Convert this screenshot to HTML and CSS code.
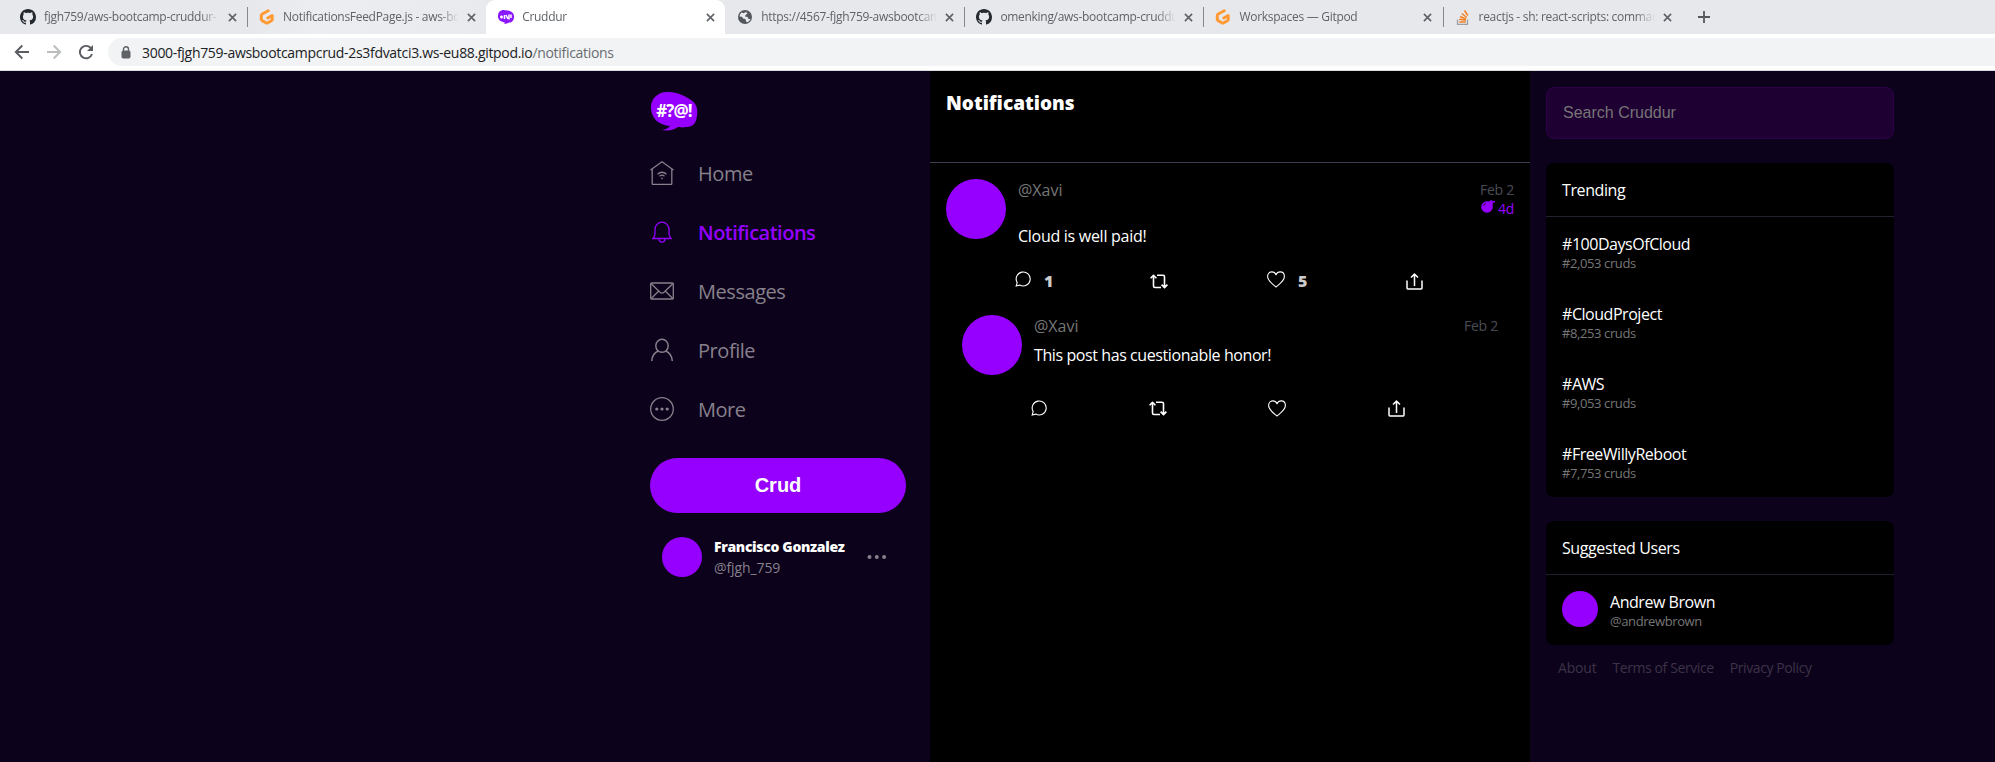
FILE: index.html
```html
<!DOCTYPE html>
<html lang="en">
<head>
<meta charset="utf-8">
<title>Cruddur</title>
<link rel="stylesheet" href="styles.css">
</head>
<body>
<svg class="defs" width="0" height="0">
  <symbol id="github" viewBox="0 0 16 16"><path fill="#24292f" d="M8 0C3.58 0 0 3.58 0 8c0 3.54 2.29 6.53 5.47 7.59.4.07.55-.17.55-.38 0-.19-.01-.82-.01-1.49-2.01.37-2.53-.49-2.69-.94-.09-.23-.48-.94-.82-1.13-.28-.15-.68-.52-.01-.53.63-.01 1.08.58 1.23.82.72 1.21 1.87.87 2.33.66.07-.52.28-.87.51-1.07-1.78-.2-3.64-.89-3.64-3.95 0-.87.31-1.59.82-2.15-.08-.2-.36-1.02.08-2.12 0 0 .67-.21 2.2.82.64-.18 1.32-.27 2-.27s1.36.09 2 .27c1.53-1.04 2.2-.82 2.2-.82.44 1.1.16 1.92.08 2.12.51.56.82 1.27.82 2.15 0 3.07-1.87 3.75-3.65 3.95.29.25.54.73.54 1.48 0 1.07-.01 1.93-.01 2.2 0 .21.15.46.55.38A8.01 8.01 0 0 0 16 8c0-4.42-3.58-8-8-8z"/></symbol>
  <symbol id="gitpod" viewBox="0 0 16 16"><path fill="none" stroke="#ff9a33" stroke-width="3" stroke-linejoin="round" stroke-linecap="round" d="M9.200 1.800L3.300 5Q2.300 5.600 2.300 6.600v3.600q0 .9.800 1.400l3.800 2.200q1 .5 2 0l3.500-2q.8-.5.800-1.400V6.500L8.800 9"/></symbol>
  <symbol id="close" viewBox="0 0 10 10"><path stroke="#5f6368" stroke-width="1.800" d="M1 1l8 8M9 1l-8 8"/></symbol>
  <symbol id="bubble" viewBox="0 0 48 40"><path fill="#9500ff" d="M1 18C0 8 8 0 19 1c8 0 16 4 22 8 6 4 7 10 6 16-1 9-6 11-11 11-4 1-7 0-8 0-4 3-9 4-16 3 4-1 7-2 8-4C9 34 2 28 1 18z"/></symbol>
  <symbol id="comment" viewBox="0 0 16 16"><path fill="none" stroke="#fff" stroke-width="1.1" d="M1.200 15l1-3.400A7 7 0 1 1 4.800 14.100z"/></symbol>
  <symbol id="repost" viewBox="0 0 18 15"><path fill="none" stroke="#fff" stroke-width="1.600" stroke-linejoin="round" d="M3.500 1.500V12q0 1.500 1.500 1.500h6M.6 4.300L3.500 1.300l2.900 3M7 1.300h6q1.500 0 1.500 1.500v10.500M11.600 10.600l2.900 3 2.900-3"/></symbol>
  <symbol id="heart" viewBox="0 0 18 17"><path fill="none" stroke="#fff" stroke-width="1.100" stroke-linejoin="round" d="M9 16C5.500 13 .6 9.800.6 5.500.6 2.600 2.500.9 4.900.9 7 .9 8.300 2.200 9 3.700 9.700 2.200 11 .9 13.100.9c2.400 0 4.300 1.700 4.300 4.600C17.400 9.800 12.500 13 9 16z"/></symbol>
  <symbol id="share" viewBox="0 0 17 17"><path fill="none" stroke="#fff" stroke-width="1.500" stroke-linejoin="round" d="M1 7.500V15q0 .9.900.9h13.200q.9 0 .9-.9V7.500M8.500 13V1.500M5 4.500l3.500-3.400L12 4.500"/></symbol>
</svg>

<header class="browser">
  <div class="tabs">
    <div class="tab"><svg class="fav"><use href="#github"/></svg><span class="label">fjgh759/aws-bootcamp-cruddur-</span><svg class="x"><use href="#close"/></svg></div>
    <div class="tab sep hover"><svg class="fav"><use href="#gitpod"/></svg><span class="label">NotificationsFeedPage.js - aws-bo</span><svg class="x"><use href="#close"/></svg></div>
    <div class="tab active"><svg class="fav" viewBox="0 0 16 16"><path fill="#8a17ff" d="M0 7.500c0-5 3-7 7-6.300C12 1.500 16 3 16 7.500c0 4-2 6-5 6-1 1-3 1.500-5 1l1-1C3 13 0 11 0 7.500z"/><path stroke="#fff" stroke-width="1.500" d="M2 8h3M3.500 6.500v3M6.500 6v4M8 6l2 4M11 5.500v5M13 5.500v3.500"/></svg><span class="label">Cruddur</span><svg class="x"><use href="#close"/></svg></div>
    <div class="tab"><svg class="fav" viewBox="0 0 16 16"><circle cx="8" cy="8" r="7" fill="#54585d"/><path fill="#e8eaed" d="M2.500 7.500q.3-2.500 2-4l2 .7L9 3l1.500 1.500L8.500 6l-.5 1.500L10.500 8l1 2h2q-1 2.500-3 3.300L9 12.500 8.500 10 6 9.500 5 7.800z"/></svg><span class="label">https://4567-fjgh759-awsbootcam</span><svg class="x"><use href="#close"/></svg></div>
    <div class="tab sep"><svg class="fav"><use href="#github"/></svg><span class="label">omenking/aws-bootcamp-cruddu</span><svg class="x"><use href="#close"/></svg></div>
    <div class="tab sep"><svg class="fav"><use href="#gitpod"/></svg><span class="label">Workspaces — Gitpod</span><svg class="x"><use href="#close"/></svg></div>
    <div class="tab sep"><svg class="fav" viewBox="0 0 16 16"><path fill="none" stroke="#9aa0a6" stroke-width="1.300" d="M2.500 10.500v4.800h10v-4.800"/><path stroke="#f48024" stroke-width="1.500" d="M4.200 13h6.600M4.300 10.300l6.500 1M5 7.500l6 2.500M6.800 4.500l5 4M9.500 1.500l3.300 5"/></svg><span class="label">reactjs - sh: react-scripts: comman</span><svg class="x"><use href="#close"/></svg></div>
    <div class="newtab"><svg width="12" height="12" viewBox="0 0 12 12"><path stroke="#54585d" stroke-width="1.800" d="M6 0v12M0 6h12"/></svg></div>
  </div>
  <div class="toolbar">
    <svg class="nav-btn" viewBox="0 0 16 16"><path fill="none" stroke="#5a5d61" stroke-width="1.900" d="M15 8H2M8.300 1.500L1.800 8l6.500 6.500"/></svg>
    <svg class="nav-btn" viewBox="0 0 16 16"><path fill="none" stroke="#babcbe" stroke-width="1.900" d="M1 8h13M7.700 1.500L14.200 8l-6.500 6.500"/></svg>
    <svg class="nav-btn" viewBox="0 0 16 16"><path fill="none" stroke="#5a5d61" stroke-width="1.900" d="M14 10A6.200 6.200 0 1 1 12.500 3.700L14 5.200"/><path fill="#5a5d61" d="M15 1v6H9z"/></svg>
    <div class="address"><svg class="lock" viewBox="0 0 10 13"><rect x="1" y="5" width="8" height="7" rx="1" fill="#5f6368" stroke="#5f6368"/><path fill="none" stroke="#5f6368" stroke-width="1.400" d="M2.500 5V3.300a2.500 2.500 0 0 1 5 0V5"/></svg><span class="url">3000-fjgh759-awsbootcampcrud-2s3fdvatci3.ws-eu88.gitpod.io<span class="path">/notifications</span></span></div>
  </div>
</header>

<div class="app">
  <nav class="sidebar">
    <div class="logo"><svg width="48" height="40"><use href="#bubble"/></svg><span class="swear">#?@!</span></div>
    <a class="item home"><svg viewBox="0 0 24 24"><path d="M.5 9L12 .8 23.500 9M2.200 8v14.500q0 1 1 1h17.600q1 0 1-1V8M7.500 13.200q4.500-4 9 0M9.500 15.200q2.500-2 5 0"/><circle cx="12" cy="17.300" r=".9" class="dot"/></svg><span>Home</span></a>
    <a class="item current"><svg viewBox="0 0 24 24"><path d="M3 18.500q2-2.500 2-5V9.500a7 7.300 0 0 1 14 0v4q0 2.500 2 5zM9 18.800a3 3.300 0 0 0 6 0"/></svg><span>Notifications</span></a>
    <a class="item"><svg viewBox="0 0 24 24"><rect x=".7" y="4" width="22.600" height="16" rx="1"/><path d="M1 4.500l9 8.800q2 1.700 4 0l9-8.800M1 19.700l7.500-7.500M23 19.700l-7.500-7.500"/></svg><span>Messages</span></a>
    <a class="item"><svg viewBox="0 0 24 24"><ellipse cx="12" cy="7.800" rx="6.200" ry="6.500" stroke-width="1.500"/><path stroke-width="1.500" d="M1.700 23q.5-7.500 6.500-10M22.300 23q-.5-7.500-6.500-10"/></svg><span>Profile</span></a>
    <a class="item"><svg viewBox="0 0 24 24"><circle cx="12" cy="12" r="11.300"/><g class="dot"><circle cx="6.800" cy="12" r="1.600"/><circle cx="12" cy="12" r="1.600"/><circle cx="17.200" cy="12" r="1.600"/></g></svg><span>More</span></a>
    <button class="crud">Crud</button>
    <div class="me">
      <div class="avatar a40"></div>
      <div class="who"><div class="name">Francisco Gonzalez</div><div class="at">@fjgh_759</div></div>
      <svg class="dots" width="20" height="6" viewBox="0 0 20 6"><circle cx="2.500" cy="3" r="2"/><circle cx="9.800" cy="3" r="2"/><circle cx="17.100" cy="3" r="2"/></svg>
    </div>
  </nav>

  <main class="feed">
    <div class="feed-head"><span>Notifications</span></div>
    <article class="post">
      <div class="avatar a60"></div>
      <div class="body">
        <div class="meta"><span class="handle">@Xavi</span><div class="times"><div class="date">Feb 2</div><div class="expires"><svg width="15" height="13" viewBox="0 0 15 13"><circle cx="6" cy="7" r="5.800"/><path d="M8 1.500l2-1.500 1.500 1H14v1.500h-2.500L12 4l-1 1.500z"/><path fill="none" stroke="#000" stroke-width=".7" d="M2.500 6q.5-2 2.500-2.600"/></svg><span>4d</span></div></div></div>
        <p class="text m1">Cloud is well paid!</p>
        <div class="actions first"><span class="act"><svg width="16" height="16"><use href="#comment"/></svg><b>1</b></span><span class="act low"><svg width="18" height="15"><use href="#repost"/></svg></span><span class="act"><svg width="18" height="17"><use href="#heart"/></svg><b>5</b></span><span class="act low"><svg width="17" height="17"><use href="#share"/></svg></span></div>
      </div>
    </article>
    <article class="post reply">
      <div class="avatar a60"></div>
      <div class="body">
        <div class="meta"><span class="handle">@Xavi</span><div class="times"><div class="date">Feb 2</div></div></div>
        <p class="text m2">This post has cuestionable honor!</p>
        <div class="actions second"><span class="act"><svg width="16" height="16"><use href="#comment"/></svg></span><span class="act"><svg width="18" height="15"><use href="#repost"/></svg></span><span class="act"><svg width="18" height="17"><use href="#heart"/></svg></span><span class="act"><svg width="17" height="17"><use href="#share"/></svg></span></div>
      </div>
    </article>
  </main>

  <aside class="right">
    <input class="search" placeholder="Search Cruddur">
    <section class="card">
      <h2>Trending</h2>
      <div class="trend"><div class="tag">#100DaysOfCloud</div><div class="count">#2,053 cruds</div></div>
      <div class="trend"><div class="tag">#CloudProject</div><div class="count">#8,253 cruds</div></div>
      <div class="trend"><div class="tag">#AWS</div><div class="count">#9,053 cruds</div></div>
      <div class="trend"><div class="tag">#FreeWillyReboot</div><div class="count">#7,753 cruds</div></div>
    </section>
    <section class="card">
      <h2>Suggested Users</h2>
      <div class="user"><div class="avatar a36"></div><div><div class="tag">Andrew Brown</div><div class="count">@andrewbrown</div></div></div>
    </section>
    <footer class="links"><a class="about">About</a><a>Terms of Service</a><a>Privacy Policy</a></footer>
  </aside>
</div>
</body>
</html>
```

FILE: styles.css
```css
* { box-sizing: border-box; }
body { margin: 0; width: 1995px; height: 762px; overflow: hidden; background: #0d021b; font-family: "Segoe UI", "Open Sans", "Noto Sans", sans-serif; font-size: 16px; color: #fff; display: flex; flex-direction: column; }
svg { display: block; flex: none; }
.defs { position: absolute; }

.browser { height: 71px; background: #fff; border-bottom: 1px solid #dadcde; flex: none; }
.tabs { display: flex; height: 34px; padding-left: 8px; background: #e7e8ec; }
.tab { width: 239.1px; height: 34px; display: flex; align-items: center; padding: 0 10px 0 12px; position: relative; font-size: 12px; letter-spacing: -.3px; color: #5f6368; flex: none; }
.tab.sep::before { content: ""; position: absolute; left: 0; top: 7px; width: 1px; height: 20px; background: #85888d; }
.tab.hover { background: linear-gradient(90deg, #e7e8ec, #ecedf0 30%, #e9eaed); }
.tab.active { background: #fff; border-radius: 9px 9px 0 0; }
.fav { width: 16px; height: 16px; }
.label { width: 176px; margin: 0 8px; white-space: nowrap; line-height: 18px; -webkit-mask-image: linear-gradient(90deg, #000 156px, transparent 176px); mask-image: linear-gradient(90deg, #000 156px, transparent 176px); }
.x { width: 9px; height: 9px; }
.newtab { display: flex; align-items: center; padding-left: 16px; }
.toolbar { height: 36px; display: flex; align-items: center; padding-left: 14px; gap: 16px; }
.nav-btn { width: 16px; height: 16px; }
.address { flex: 1; height: 28px; margin-left: -2px; border-radius: 14px 0 0 14px; background: #f1f3f4; display: flex; align-items: center; padding-left: 13px; gap: 11px; }
.lock { width: 10px; height: 13px; }
.url { font-size: 14px; letter-spacing: -.31px; color: #202124; white-space: nowrap; }
.path { color: #6a6d71; }

.app { display: flex; flex: 1; padding-left: 650px; }
.sidebar { width: 280px; padding: 20px 24px 0 0; }
.logo { width: 48px; height: 40px; display: grid; }
.logo > * { grid-area: 1 / 1; }
.swear { font: 700 17px/39px "Open Sans", sans-serif; text-align: center; color: #fff; letter-spacing: -.9px; }
.item.home { margin-top: 12px; }
.item { height: 59px; display: flex; align-items: center; gap: 24px; font-size: 20px; letter-spacing: -.45px; color: #86818c; }
.item svg { width: 24px; height: 24px; fill: none; stroke: currentColor; stroke-width: 1.3; }
.item svg .dot { fill: currentColor; stroke: none; }
.item span { line-height: 28px; padding-top: 2px; white-space: nowrap; }
.item.current { color: #9500ff; font-weight: 600; letter-spacing: -.5px; }
.crud { display: block; width: 256px; height: 55px; margin-top: 20px; border: 0; border-radius: 28px; background: #9500ff; color: #fff; font: 700 20px "Liberation Sans", Arial, sans-serif; }
.me { display: flex; align-items: center; padding: 23px 12px 0; }
.avatar { border-radius: 50%; background: #9500ff; flex: none; }
.a40 { width: 40px; height: 40px; }
.a60 { width: 60px; height: 60px; }
.a36 { width: 36px; height: 36px; }
.who { width: 155px; padding-left: 12px; white-space: nowrap; }
.name { font-size: 14px; font-weight: 800; line-height: 20px; letter-spacing: -.33px; padding-top: 1px; }
.at { font-size: 14px; line-height: 21px; letter-spacing: -.1px; color: #86818c; }
.dots { fill: #86818c; margin-left: 10px; }

.feed { width: 600px; background: #000; }
.feed-head { height: 92px; border-bottom: 1px solid #3c3d4c; padding: 17px 16px; font-size: 19px; font-weight: 800; line-height: 30px; }
.post { display: flex; gap: 12px; padding: 16px 16px 0; height: 136px; }
.post.reply { padding: 16px 32px 0; }
.body { flex: 1; }
.meta { display: flex; justify-content: space-between; height: 24px; color: #777; }
.handle { line-height: 23px; }
.times { text-align: right; font-size: 14px; line-height: 21px; letter-spacing: -.25px; color: #4a4b57; }
.expires { display: flex; justify-content: flex-end; gap: 2px; line-height: 17px; color: #9500ff; }
.expires svg { fill: #9500ff; }
.text { margin: 0; line-height: 24px; white-space: nowrap; color: #fff; }
.m1 { padding-top: 21px; letter-spacing: -.28px; }
.m2 { padding-top: 4px; letter-spacing: -.41px; }
.actions { display: grid; align-items: center; height: 20px; }
.actions.first { grid-template-columns: 135px 117px 139px 20px; margin: 21px 0 0 -3px; }
.actions.second { grid-template-columns: 118px 119px 120px 20px; margin: 31px 0 0 -3px; }
.act { display: flex; align-items: center; gap: 13px; height: 20px; }
.first .low { padding-top: 5px; }
.act b { font-weight: 800; font-size: 16px; line-height: 20px; padding-top: 4px; color: #ccc; }

.right { width: 364px; padding: 16px 0 0 16px; }
.search { display: block; width: 348px; height: 52px; padding: 0 16px; border: 1px solid #2c0049; border-radius: 8px; background: #1f0033; color: #fff; font: 16px "Liberation Sans", Arial, sans-serif; }
.search::placeholder { color: #757575; }
.card { width: 348px; margin-top: 24px; border-radius: 8px; background: #000; overflow: hidden; white-space: nowrap; }
.card h2 { margin: 0; height: 54px; padding: 16px; font-size: 16px; font-weight: 400; line-height: 23px; letter-spacing: -.4px; border-bottom: 1px solid #1f2131; }
.trend { height: 70px; padding: 16px; }
.tag { line-height: 22px; letter-spacing: -.46px; }
.count { font-size: 13px; line-height: 16px; letter-spacing: -.4px; color: #777; }
.user { height: 70px; padding: 16px; display: flex; gap: 12px; }
.links { display: flex; gap: 16px; padding: 11px 12px; font-size: 14px; line-height: 23px; letter-spacing: -.4px; color: #3c3348; white-space: nowrap; }
.about { letter-spacing: -.2px; }
```
